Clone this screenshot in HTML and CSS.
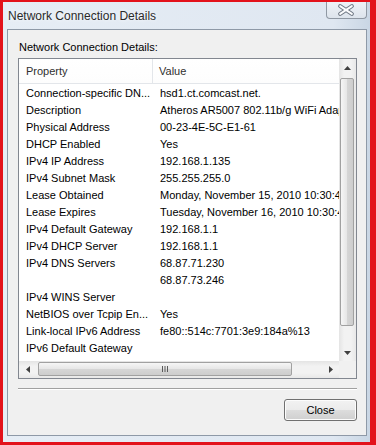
FILE: index.html
```html
<!DOCTYPE html>
<html>
<head>
<meta charset="utf-8">
<link rel="stylesheet" href="styles.css">
</head>
<body>
<div class="window">
  <div class="titlebar">
    <span class="title">Network Connection Details</span>
    <div class="tclose">
      <svg width="41" height="17" viewBox="0 0 41 17">
        <g stroke-linecap="round">
          <path d="M14.5 5 L26.5 13 M26.5 5 L14.5 13" stroke="#6f7884" stroke-width="4.2"/>
          <path d="M14.5 5 L26.5 13 M26.5 5 L14.5 13" stroke="#fbfcfd" stroke-width="2"/>
        </g>
      </svg>
    </div>
  </div>
  <div class="client">
    <div class="label">Network Connection Details:</div>
    <div class="listbox">
      <div class="content">
        <div class="header">
          <div class="hcell hprop">Property</div>
          <div class="hcell hval">Value</div>
        </div>
        <div class="rows">
          <div class="row"><span class="p">Connection-specific DN...</span><span class="v">hsd1.ct.comcast.net.</span></div>
          <div class="row"><span class="p">Description</span><span class="v">Atheros AR5007 802.11b/g WiFi Adapter</span></div>
          <div class="row"><span class="p">Physical Address</span><span class="v">00-23-4E-5C-E1-61</span></div>
          <div class="row"><span class="p">DHCP Enabled</span><span class="v">Yes</span></div>
          <div class="row"><span class="p">IPv4 IP Address</span><span class="v">192.168.1.135</span></div>
          <div class="row"><span class="p">IPv4 Subnet Mask</span><span class="v">255.255.255.0</span></div>
          <div class="row"><span class="p">Lease Obtained</span><span class="v">Monday, November 15, 2010 10:30:47 PM</span></div>
          <div class="row"><span class="p">Lease Expires</span><span class="v">Tuesday, November 16, 2010 10:30:47 PM</span></div>
          <div class="row"><span class="p">IPv4 Default Gateway</span><span class="v">192.168.1.1</span></div>
          <div class="row"><span class="p">IPv4 DHCP Server</span><span class="v">192.168.1.1</span></div>
          <div class="row"><span class="p">IPv4 DNS Servers</span><span class="v">68.87.71.230</span></div>
          <div class="row"><span class="p"></span><span class="v">68.87.73.246</span></div>
          <div class="row"><span class="p">IPv4 WINS Server</span><span class="v"></span></div>
          <div class="row"><span class="p">NetBIOS over Tcpip En...</span><span class="v">Yes</span></div>
          <div class="row"><span class="p">Link-local IPv6 Address</span><span class="v">fe80::514c:7701:3e9:184a%13</span></div>
          <div class="row"><span class="p">IPv6 Default Gateway</span><span class="v"></span></div>
          <div class="row"><span class="p">IPv6 DNS Servers</span><span class="v"></span></div>
        </div>
      </div>
      <div class="vscroll">
        <div class="arrow"><svg width="7" height="4" viewBox="0 0 7 4"><polygon points="0,4 7,4 3.5,0" fill="#404040"/></svg></div>
        <div class="vtrack"><div class="vthumb"></div></div>
        <div class="arrow"><svg width="7" height="4" viewBox="0 0 7 4"><polygon points="0,0 7,0 3.5,4" fill="#404040"/></svg></div>
      </div>
      <div class="hscroll">
        <div class="arrow"><svg width="4" height="7" viewBox="0 0 4 7"><polygon points="4,0 4,7 0,3.5" fill="#404040"/></svg></div>
        <div class="htrack">
          <div class="hthumb">
            <svg width="8" height="6" viewBox="0 0 8 6"><path d="M1.5 0 V6 M4 0 V6 M6.5 0 V6" stroke="#5a5a5a" stroke-width="1"/></svg>
          </div>
        </div>
        <div class="arrow"><svg width="4" height="7" viewBox="0 0 4 7"><polygon points="0,0 0,7 4,3.5" fill="#404040"/></svg></div>
      </div>
      <div class="corner"></div>
    </div>
    <div class="sep"></div>
    <div class="buttons">
      <div class="btn">Close</div>
    </div>
  </div>
</div>
</body>
</html>
```

FILE: styles.css
```css
html, body {
  margin: 0;
  padding: 0;
}
body {
  width: 376px;
  height: 445px;
  background: #e3121b;
  overflow: hidden;
  font-family: "Liberation Sans", Arial, sans-serif;
  color: #000;
}
.window {
  box-sizing: border-box;
  margin: 2px 6px 3px 3px;
  width: 367px;
  height: 440px;
  background: linear-gradient(to right, #e6edf5 0%, #dfe7f1 90%, #c9d6e4 100%);
  padding: 0 3px 6px 4px;
  display: flex;
  flex-direction: column;
}
.titlebar {
  height: 27px;
  display: flex;
  align-items: center;
  justify-content: space-between;
  padding-left: 1px;
}
.title {
  font-size: 12px;
  color: #2a2a2a;
  text-shadow: 0 0 4px #ffffff;
}
.tclose {
  align-self: flex-start;
  box-sizing: border-box;
  width: 41px;
  height: 17px;
  border: 1px solid #8f98a3;
  border-top: none;
  border-radius: 0 0 4px 4px;
  background: linear-gradient(#eef2f7, #dde4ec);
  display: flex;
}
.tclose svg {
  display: block;
  margin: -1px 0 0 -1px;
}
.client {
  flex: 1;
  background: #f0f0f0;
  border: 1px solid #8e99a7;
  padding: 10px 9px 0 10px;
  display: flex;
  flex-direction: column;
  font-size: 11px;
}
.label {
  line-height: 14px;
  height: 14px;
  padding-left: 1px;
  margin-bottom: 4px;
}
.listbox {
  box-sizing: border-box;
  width: 339px;
  height: 321px;
  border: 1px solid #828790;
  background: #fff;
  display: grid;
  grid-template-columns: 320px 17px;
  grid-template-rows: 302px 17px;
}
.content {
  overflow: hidden;
  white-space: nowrap;
}
.header {
  box-sizing: border-box;
  height: 25px;
  display: grid;
  grid-template-columns: 134px 1fr;
  border-bottom: 1px solid #e3e6ea;
  background: linear-gradient(#ffffff, #fdfdfd);
}
.hcell {
  display: flex;
  align-items: center;
  color: #2f2f2f;
}
.hprop {
  padding-left: 7px;
  border-right: 1px solid #e3e6ea;
}
.hval {
  padding-left: 6px;
}
.rows {
  padding-top: 1px;
}
.row {
  height: 17px;
  line-height: 17px;
  display: grid;
  grid-template-columns: 134px 1fr;
  overflow: hidden;
}
.p {
  padding-left: 7px;
  overflow: hidden;
}
.v {
  padding-left: 7px;
  overflow: hidden;
}
.vscroll {
  grid-row: 1;
  grid-column: 2;
  display: flex;
  flex-direction: column;
  background: linear-gradient(to right, #e4e4e4, #f2f2f2 30%, #f2f2f2 70%, #e8e8e8);
}
.arrow {
  width: 17px;
  height: 17px;
  flex: none;
  display: flex;
  align-items: center;
  justify-content: center;
}
.vtrack {
  flex: 1;
  padding: 2px 2px 0 1px;
}
.vthumb {
  box-sizing: border-box;
  height: 248px;
  border: 1px solid #a1a1a1;
  border-radius: 2px;
  background: linear-gradient(to right, #f6f6f6, #e6e6e6 50%, #d6d6d6 51%, #cdcdcd);
}
.hscroll {
  grid-row: 2;
  grid-column: 1;
  display: flex;
  background: linear-gradient(#e4e4e4, #f2f2f2 30%, #f2f2f2 70%, #e8e8e8);
}
.htrack {
  flex: 1;
  padding: 1px 0 2px 2px;
}
.hthumb {
  box-sizing: border-box;
  width: 254px;
  height: 100%;
  border: 1px solid #a1a1a1;
  border-radius: 2px;
  background: linear-gradient(#f6f6f6, #e6e6e6 50%, #d6d6d6 51%, #cdcdcd);
  display: flex;
  align-items: center;
  justify-content: center;
}
.hthumb svg {
  display: block;
}
.corner {
  grid-row: 2;
  grid-column: 2;
  background: #f0f0f0;
}
.sep {
  box-sizing: border-box;
  width: 339px;
  height: 2px;
  border-top: 1px solid #a0a0a0;
  border-bottom: 1px solid #ffffff;
  margin-top: 9px;
}
.buttons {
  width: 339px;
  display: flex;
  justify-content: flex-end;
  margin-top: 9px;
}
.btn {
  box-sizing: border-box;
  width: 73px;
  height: 22px;
  border: 1px solid #707070;
  border-radius: 3px;
  background: linear-gradient(#f2f2f2, #ebebeb 50%, #dddddd 51%, #cfcfcf);
  box-shadow: inset 0 0 0 1px #fcfcfc;
  display: flex;
  align-items: center;
  justify-content: center;
  font-size: 11px;
}
```
